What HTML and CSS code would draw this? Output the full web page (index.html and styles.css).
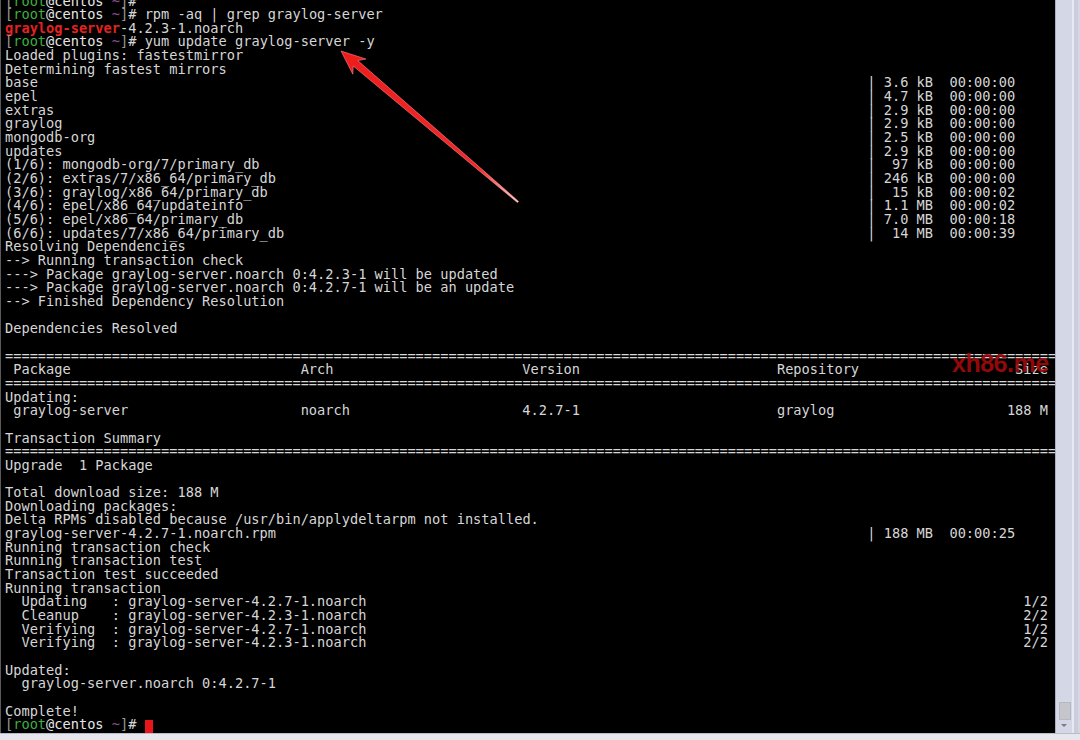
FILE: index.html
```html
<!DOCTYPE html>
<html>
<head>
<meta charset="utf-8">
<link rel="stylesheet" href="styles.css">
</head>
<body>
<div class="window">
  <div class="main">
    <div class="term">
<pre class="out"><span class="b">[</span><span class="u">root</span><span class="h">@centos</span> <span class="t">~</span><span class="b">]</span># 
<span class="b">[</span><span class="u">root</span><span class="h">@centos</span> <span class="t">~</span><span class="b">]</span># rpm -aq | grep graylog-server
<span class="hl">graylog-server</span>-4.2.3-1.noarch
<span class="b">[</span><span class="u">root</span><span class="h">@centos</span> <span class="t">~</span><span class="b">]</span># yum update graylog-server -y
Loaded plugins: fastestmirror
Determining fastest mirrors
<span class="n">base</span>| 3.6 kB  00:00:00
<span class="n">epel</span>| 4.7 kB  00:00:00
<span class="n">extras</span>| 2.9 kB  00:00:00
<span class="n">graylog</span>| 2.9 kB  00:00:00
<span class="n">mongodb-org</span>| 2.5 kB  00:00:00
<span class="n">updates</span>| 2.9 kB  00:00:00
<span class="n">(1/6): mongodb-org/7/primary_db</span>|  97 kB  00:00:00
<span class="n">(2/6): extras/7/x86_64/primary_db</span>| 246 kB  00:00:00
<span class="n">(3/6): graylog/x86_64/primary_db</span>|  15 kB  00:00:02
<span class="n">(4/6): epel/x86_64/updateinfo</span>| 1.1 MB  00:00:02
<span class="n">(5/6): epel/x86_64/primary_db</span>| 7.0 MB  00:00:18
<span class="n">(6/6): updates/7/x86_64/primary_db</span>|  14 MB  00:00:39
Resolving Dependencies
--> Running transaction check
---> Package graylog-server.noarch 0:4.2.3-1 will be updated
---> Package graylog-server.noarch 0:4.2.7-1 will be an update
--> Finished Dependency Resolution

Dependencies Resolved

================================================================================================================================
<span class="c1"> Package</span><span class="c2">Arch</span><span class="c3">Version</span><span class="c4">Repository</span><span class="c5">Size</span>
================================================================================================================================
Updating:
<span class="c1"> graylog-server</span><span class="c2">noarch</span><span class="c3">4.2.7-1</span><span class="c4">graylog</span><span class="c5">188 M</span>

Transaction Summary
================================================================================================================================
Upgrade  1 Package

Total download size: 188 M
Downloading packages:
Delta RPMs disabled because /usr/bin/applydeltarpm not installed.
<span class="n">graylog-server-4.2.7-1.noarch.rpm</span>| 188 MB  00:00:25
Running transaction check
Running transaction test
Transaction test succeeded
Running transaction
<span class="st">  Updating   : graylog-server-4.2.7-1.noarch</span><span class="sr">1/2</span>
<span class="st">  Cleanup    : graylog-server-4.2.3-1.noarch</span><span class="sr">2/2</span>
<span class="st">  Verifying  : graylog-server-4.2.7-1.noarch</span><span class="sr">1/2</span>
<span class="st">  Verifying  : graylog-server-4.2.3-1.noarch</span><span class="sr">2/2</span>

Updated:
  graylog-server.noarch 0:4.2.7-1

Complete!
<span class="b">[</span><span class="u">root</span><span class="h">@centos</span> <span class="t">~</span><span class="b">]</span># <span class="cursor"> </span></pre>
      <div class="watermark">xh86.me</div>
      <svg class="arrow" width="1080" height="740" viewBox="0 0 1080 740">
        <defs>
          <linearGradient id="ag" x1="341" y1="51" x2="518" y2="202" gradientUnits="userSpaceOnUse">
            <stop offset="0" stop-color="#ee1c1c"/>
            <stop offset="0.78" stop-color="#ee2a2a"/>
            <stop offset="1" stop-color="#ffd8d8"/>
          </linearGradient>
        </defs>
        <polygon points="341,51 365.8,59 357.8,60.6 518.6,201.4 517.4,202.6 353.2,66 352.8,74.2" fill="url(#ag)" stroke="#ff8a8a" stroke-width="0.6" stroke-linejoin="round"/>
      </svg>
    </div>
    <div class="scroll">
      <div class="track"></div>
      <div class="thumb"></div>
      <div class="down"></div>
    </div>
  </div>
  <div class="bottom"></div>
</div>
</body>
</html>
```

FILE: styles.css
```css
html, body {
  margin: 0;
  padding: 0;
  background: #000;
}
body {
  width: 1080px;
  height: 740px;
  overflow: hidden;
}
.window {
  display: flex;
  flex-direction: column;
  width: 1080px;
  height: 740px;
}
.main {
  display: flex;
  flex-direction: row;
  height: 733px;
}
.term {
  position: relative;
  flex: 1;
  background: #000;
  border-left: 1px solid #5a5a5a;
  padding-left: 4px;
  overflow: hidden;
}
.out {
  margin: -5.5px 0 0 0;
  font-family: "DejaVu Sans Mono", monospace;
  font-size: 13.65px;
  line-height: 13.654px;
  color: #d6d6d6;
  white-space: pre;
}
.b { color: #9a9a9a; }
.u { color: #3fae3f; }
.h { color: #e6e6e6; }
.t { color: #8a4a8a; }
.hl { color: #e42222; font-weight: bold; }
.n { display: inline-block; width: 105ch; }
.c1 { display: inline-block; width: 36ch; }
.c2 { display: inline-block; width: 27ch; }
.c3 { display: inline-block; width: 31ch; }
.c4 { display: inline-block; width: 28ch; }
.c5 { display: inline-block; width: 5ch; text-align: right; }
.st { display: inline-block; width: 124ch; }
.sr { display: inline-block; width: 3ch; }
.cursor {
  display: inline-block;
  width: 8px;
  height: 13px;
  background: #e8151b;
  vertical-align: -2px;
}
.watermark {
  position: absolute;
  left: 951px;
  top: 349px;
  font-family: "Liberation Sans", Arial, sans-serif;
  font-size: 25px;
  font-weight: bold;
  letter-spacing: -0.5px;
  color: rgba(160, 10, 10, 0.92);
}
.arrow {
  position: absolute;
  left: -1px;
  top: 0;
}
.scroll {
  position: relative;
  width: 25px;
  background: #d3d7e6;
  border-left: 1px solid #aab0c4;
  box-sizing: border-box;
}
.track {
  position: absolute;
  top: 0;
  bottom: 0;
  left: 16px;
  width: 2px;
  background: #e6e9f2;
  border-right: 4px solid #c9cddc;
}
.thumb {
  position: absolute;
  left: 3px;
  top: 702px;
  width: 10px;
  height: 16px;
  background: #c4c6cc;
  border: 1px solid #b6b8c0;
}
.down {
  position: absolute;
  left: 5px;
  top: 724px;
  width: 0;
  height: 0;
  border-left: 3px solid transparent;
  border-right: 3px solid transparent;
  border-top: 3px solid #7a7a80;
}
.bottom {
  height: 7px;
  background: #e6e7ec;
  border-top: 1px solid #b8bcc8;
}
```
